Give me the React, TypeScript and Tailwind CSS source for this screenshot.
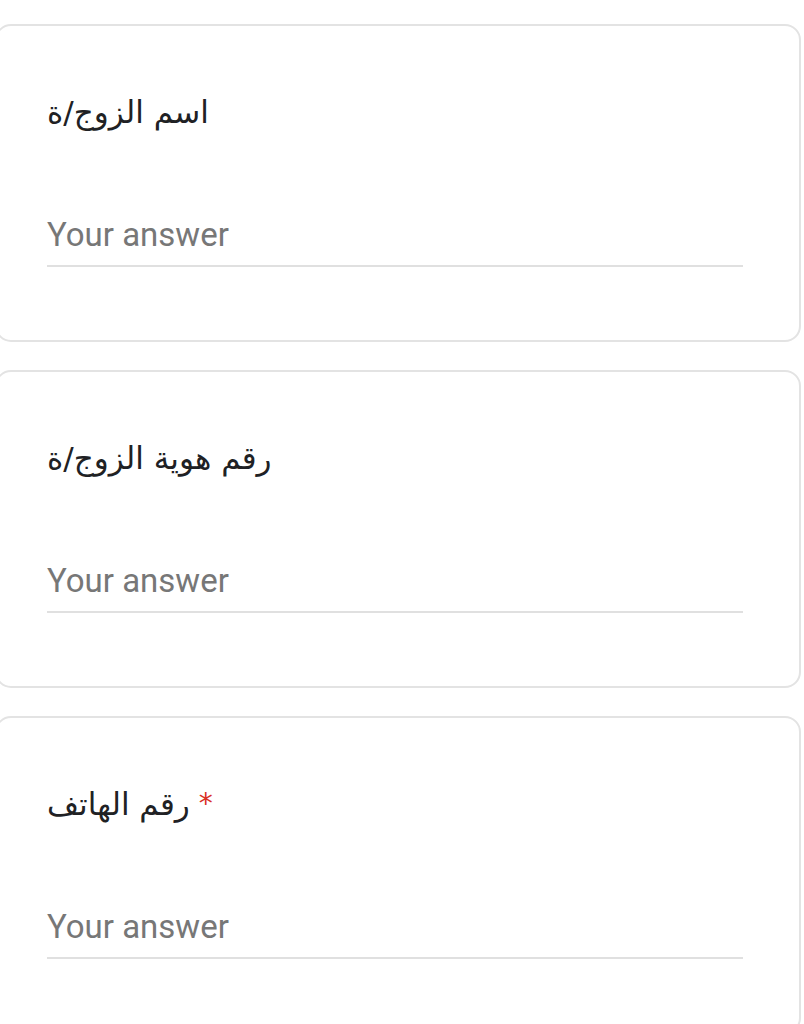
import React from 'react';

interface QuestionCardProps {
  title: string;
  required?: boolean;
}

const QuestionCard = ({ title, required }: QuestionCardProps) => {
  return (
    <div className="ml-[-5px] w-[806px] rounded-[16px] border-2 border-[#e3e3e3] bg-white pl-[50px] pr-[56px] pt-[66px] pb-[73px]">
      <div className="text-[31px] leading-[40px] text-[#202124] font-['DejaVu_Sans',sans-serif]">
        {title}
        {required && <span className="text-[#d93025] text-[28px] align-top"> *</span>}
      </div>
      <div className="mt-[83px] border-b-2 border-[#e0e0e0] pb-[10px]">
        <span className="text-[33px] leading-[40px] text-[#777777] font-['Roboto',sans-serif]">
          Your answer
        </span>
      </div>
    </div>
  );
};

export default function App() {
  return (
    <div className="min-h-[1024px] w-[804px] overflow-hidden bg-white pt-[24px]">
      <div className="flex flex-col gap-[28px]">
        <QuestionCard title="اسم الزوج/ة" />
        <QuestionCard title="رقم هوية الزوج/ة" />
        <QuestionCard title="رقم الهاتف" required />
      </div>
    </div>
  );
}
